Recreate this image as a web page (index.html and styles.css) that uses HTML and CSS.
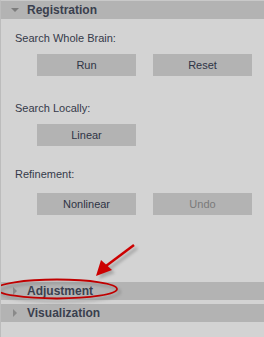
FILE: index.html
```html
<!DOCTYPE html>
<html lang="en">
<head>
    <meta charset="UTF-8">
    <title>Registration Panel</title>
    <link rel="stylesheet" href="styles.css">
</head>
<body>
    <div class="panel">
        <div class="section-header open">
            <span class="arrow-down"></span>
            <span class="title">Registration</span>
        </div>

        <div class="section-body">
            <div class="group">
                <div class="label">Search Whole Brain:</div>
                <div class="button-row">
                    <button class="btn">Run</button>
                    <button class="btn">Reset</button>
                </div>
            </div>
            <div class="group">
                <div class="label">Search Locally:</div>
                <div class="button-row">
                    <button class="btn">Linear</button>
                </div>
            </div>
            <div class="group refine">
                <div class="label">Refinement:</div>
                <div class="button-row">
                    <button class="btn">Nonlinear</button>
                    <button class="btn" disabled>Undo</button>
                </div>
            </div>
        </div>

        <div class="section-header">
            <span class="arrow-right"></span>
            <span class="title">Adjustment</span>
        </div>
        <div class="section-header">
            <span class="arrow-right"></span>
            <span class="title">Visualization</span>
        </div>

        <!-- annotation drawn over the panel -->
        <svg class="annotation" width="264" height="337" viewBox="0 0 264 337">
            <defs>
                <filter id="shade" x="-20%" y="-20%" width="140%" height="160%">
                    <feGaussianBlur stdDeviation="1.5"/>
                </filter>
            </defs>
            <g opacity="0.35" filter="url(#shade)" transform="translate(3,3)">
                <line x1="134" y1="245" x2="106" y2="266" stroke="#555" stroke-width="3"/>
                <polygon points="96,276 101,260 112,270" fill="#555"/>
                <ellipse cx="57" cy="289" rx="60" ry="9.5" fill="none" stroke="#555" stroke-width="2"/>
            </g>
            <line x1="134" y1="245" x2="106" y2="266" stroke="#cc0000" stroke-width="2.5"/>
            <polygon points="96,276 101,260 112,270" fill="#cc0000"/>
            <ellipse cx="57" cy="289" rx="60" ry="9.5" fill="none" stroke="#c00000" stroke-width="1.8"/>
        </svg>
    </div>
</body>
</html>
```

FILE: styles.css
```css
body {
    margin: 0;
    background-color: #d3d3d3;
    font-family: "Liberation Sans", Arial, sans-serif;
}
.panel {
    position: relative;
    width: 264px;
    height: 337px;
    display: flex;
    flex-direction: column;
    border-left: 1px solid #bcbcbc;
    border-top: 1px solid #c9c9c9;
    padding-bottom: 11px;
    box-sizing: border-box;
    overflow: hidden;
}
.section-header {
    height: 18px;
    flex-shrink: 0;
    background-color: #b3b3b3;
    display: flex;
    align-items: center;
    margin-bottom: 4px;
}
.section-header.open {
    margin-bottom: 0;
}
.title {
    font-size: 12px;
    font-weight: bold;
    color: #3a3f4e;
    margin-left: 5px;
}
.arrow-down {
    width: 0;
    height: 0;
    margin-left: 10px;
    border-left: 4px solid transparent;
    border-right: 4px solid transparent;
    border-top: 4px solid #7d7d7d;
    margin-right: 3px;
}
.arrow-right {
    width: 0;
    height: 0;
    margin-left: 12px;
    border-top: 4px solid transparent;
    border-bottom: 4px solid transparent;
    border-left: 4px solid #8a8a8a;
    margin-right: 5px;
}
.section-body {
    flex: 1;
    padding-top: 12px;
}
.group {
    margin-bottom: 25px;
}
.group.refine {
    margin-top: -4px;
}
.label {
    font-size: 11px;
    line-height: 14px;
    color: #353a4a;
    padding-left: 14px;
    margin-bottom: 9px;
}
.refine .label {
    margin-bottom: 12px;
}
.button-row {
    display: flex;
    gap: 17px;
    padding-left: 36px;
}
.btn {
    width: 99px;
    height: 22px;
    border: none;
    background-color: #b3b3b3;
    color: #2f3445;
    font-family: "Liberation Sans", Arial, sans-serif;
    font-size: 11px;
    padding: 0;
    cursor: pointer;
}
.btn:disabled {
    color: #7a7a7a;
}
.annotation {
    position: absolute;
    left: -1px;
    top: -1px;
    pointer-events: none;
}
```
